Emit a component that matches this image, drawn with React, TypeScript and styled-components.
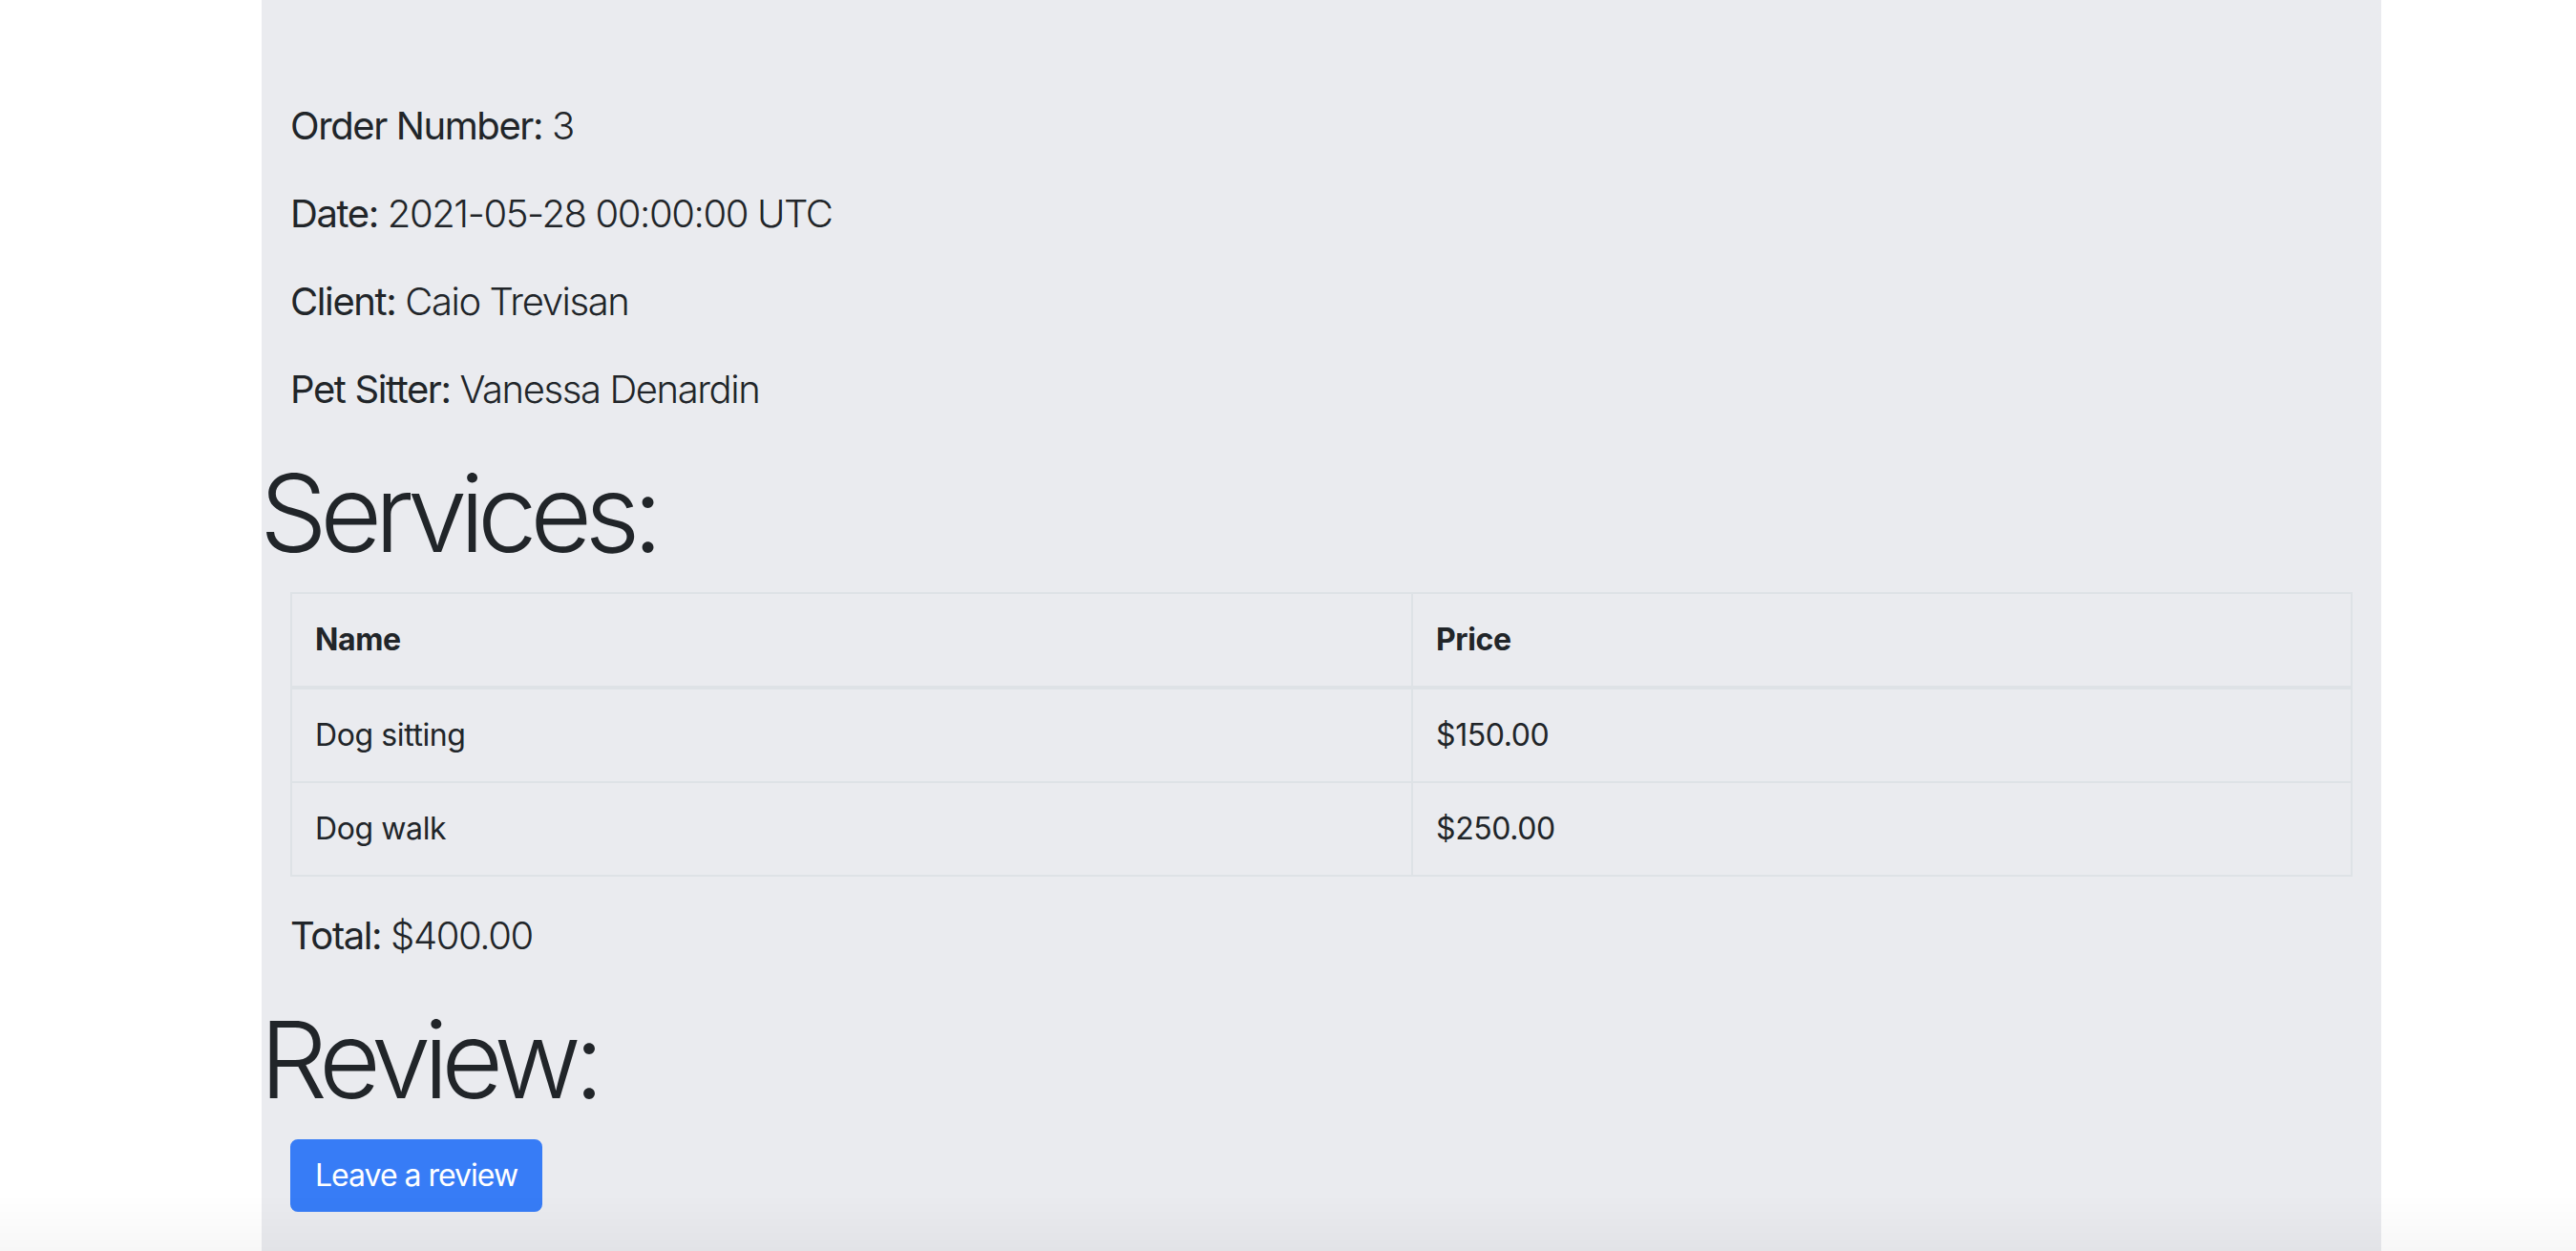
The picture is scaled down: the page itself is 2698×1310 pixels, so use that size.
import React from "react";
import styled, { createGlobalStyle } from "styled-components";

const GlobalStyle = createGlobalStyle`
  html, body {
    margin: 0;
    padding: 0;
    background: #ffffff;
  }
  body {
    font-family: Inter, "Noto Sans", "Liberation Sans", sans-serif;
    color: #212529;
    min-height: 100vh;
  }
  * { box-sizing: border-box; }
`;

const Page = styled.div`
  min-height: 100vh;
  padding-left: 274px;
  display: flex;
`;

const Panel = styled.main`
  width: 2220px;
  min-height: 100vh;
  background: #eaebef;
  padding-top: 102px;
  padding-bottom: 40px;
`;

const Inset = styled.div`
  padding: 0 30px;
`;

const Lead = styled.p`
  margin: 0 0 32px;
  font-size: 40px;
  line-height: 60px;
  font-weight: 300;
  letter-spacing: -1.4px;
`;

const Label = styled.strong`
  font-weight: 400;
`;

const DisplayHeading = styled.h1`
  margin: 0 0 16px -2px;
  font-size: 112px;
  line-height: 1.2;
  font-weight: 300;
  letter-spacing: -7.6px;
`;

const Table = styled.table`
  width: 100%;
  border-collapse: collapse;
  table-layout: fixed;
  margin-bottom: 32px;
  font-size: 32px;
  line-height: 48px;
  letter-spacing: -0.4px;
`;

const Cell = styled.td<{ $head?: boolean }>`
  border: 2px solid #dee2e6;
  border-bottom-width: ${(p) => (p.$head ? "4px" : "2px")};
  padding: 24px;
  text-align: left;
  vertical-align: top;
  font-weight: ${(p) => (p.$head ? 700 : 400)};
`;

const Button = styled.button`
  display: inline-block;
  font-family: inherit;
  font-size: 32px;
  line-height: 48px;
  font-weight: 400;
  letter-spacing: -1px;
  color: #ffffff;
  background: #377cf6;
  border: 2px solid #377cf6;
  border-radius: 8px;
  padding: 12px 24px;
  cursor: pointer;
`;

const BottomShade = styled.div`
  position: fixed;
  left: 0;
  right: 0;
  bottom: 0;
  height: 60px;
  pointer-events: none;
  background: linear-gradient(to bottom, rgba(0, 0, 0, 0), rgba(0, 0, 0, 0.03));
`;

const details: [string, string][] = [
  ["Order Number:", "3"],
  ["Date:", "2021-05-28 00:00:00 UTC"],
  ["Client:", "Caio Trevisan"],
  ["Pet Sitter:", "Vanessa Denardin"],
];

const services: [string, string][] = [
  ["Dog sitting", "$150.00"],
  ["Dog walk", "$250.00"],
];

export default function App() {
  return (
    <>
      <GlobalStyle />
      <Page>
        <Panel>
          <Inset>
            {details.map(([label, value]) => (
              <Lead key={label}>
                <Label>{label}</Label> {value}
              </Lead>
            ))}
          </Inset>
          <DisplayHeading>Services:</DisplayHeading>
          <Inset>
            <Table>
              <colgroup>
                <col style={{ width: "1174px" }} />
                <col />
              </colgroup>
              <thead>
                <tr>
                  <Cell as="th" $head>Name</Cell>
                  <Cell as="th" $head>Price</Cell>
                </tr>
              </thead>
              <tbody>
                {services.map(([name, price]) => (
                  <tr key={name}>
                    <Cell>{name}</Cell>
                    <Cell>{price}</Cell>
                  </tr>
                ))}
              </tbody>
            </Table>
            <Lead>
              <Label>Total:</Label> $400.00
            </Lead>
          </Inset>
          <DisplayHeading>Review:</DisplayHeading>
          <Inset>
            <Button type="button">Leave a review</Button>
          </Inset>
        </Panel>
      </Page>
      <BottomShade />
    </>
  );
}
